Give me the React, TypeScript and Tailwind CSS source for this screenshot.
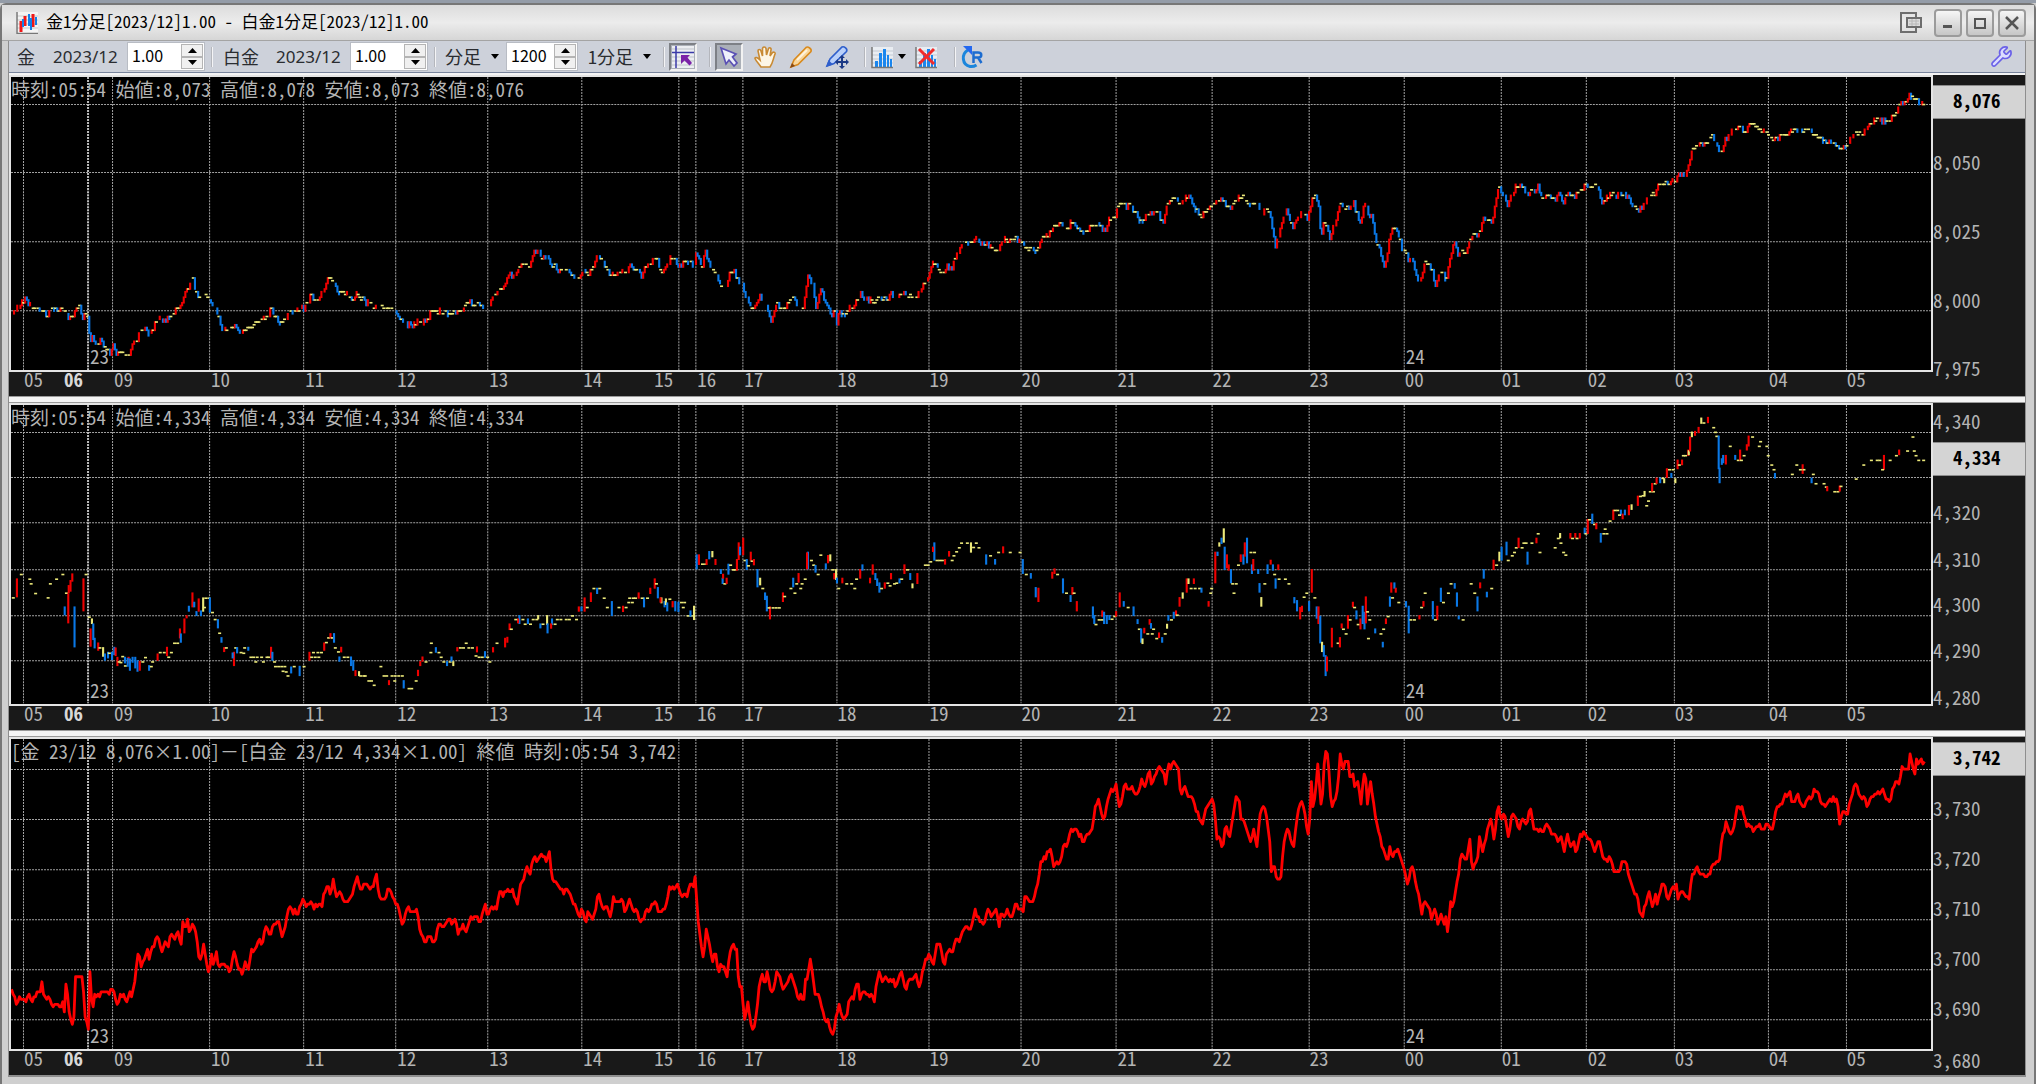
import { useState } from 'react'
import type { ReactNode } from 'react'
import { Wrench } from 'lucide-react'

// Chart drawing units: the plot is recorded in three stretches, each with its own start
const STARTS = [0, 1478, 2993]
const UNIT_X = 2.24
const UNIT_Y = 3
const PLOT_W = 1919
const AXIS_W = 1923

const COLORS: Record<string, string> = { r: '#f00000', b: '#0a78e6', y: '#ece97a' }

const GRID_X = [12, 101, 198, 292, 384, 476, 570, 667, 684, 731, 825, 917, 1009, 1104, 1200, 1297, 1392, 1489, 1574, 1662, 1756, 1834]
const DAY_X = 77

const HOURS: [string, number][] = [
  ['05', 15], ['06', 55], ['09', 105], ['10', 202], ['11', 296], ['12', 388], ['13', 480], ['14', 574], ['15', 645],
  ['16', 688], ['17', 735], ['18', 828], ['19', 920], ['20', 1012], ['21', 1108], ['22', 1203], ['23', 1300],
  ['00', 1395], ['01', 1492], ['02', 1578], ['03', 1665], ['04', 1759], ['05', 1837],
]

const GOLD = [
  '30,705 38,695 48,672 58,662 70,678 80,690 95,692 105,710 112,700 118,688 130,694 140,680 148,700 158,725 168,700 180,675 188,715 194,700 199,712 204,790 210,770 218,800 228,785 240,810 250,825 256,800 262,828 275,815 285,828 293,820 300,800 308,785 316,765 326,748 336,765 345,745 358,715 370,725 380,710 390,715 398,685 405,690 412,660 420,630 428,610 434,595 440,630 450,660 460,650 471,665 478,675 486,690 493,715 500,755 510,750 520,755 528,735 540,760 550,755 560,740 575,735 590,720 600,715 610,682 620,715 632,735 642,715 655,700 668,692 680,688 692,675 698,650 706,665 716,662 724,640 732,615 740,595 748,600 756,635 768,645 780,640 792,660 802,638 812,658 822,668 835,672 845,685 858,670 868,690 880,685 890,705 900,720 912,735 925,738 938,725 955,728 965,700 975,690 985,698 995,692 1008,705 1020,695 1032,700 1042,680 1055,665 1068,680 1080,670 1090,690 1102,660 1112,650 1120,630 1132,615 1144,585 1155,595 1165,565 1178,550 1190,555 1198,515 1208,520 1218,540 1228,530 1238,560 1250,570 1262,572 1275,575 1285,597 1298,595 1308,575 1320,585 1328,560 1336,545 1340,522 1348,540 1358,560 1370,585 1385,580 1395,570 1405,575 1413,560 1422,570 1432,575 1440,592 1450,555 1462,545 1472,535 1480,565 1490,575 1500,545 1502,530 1512,545 1522,565 1535,550 1548,552 1558,553',
  '81,520 90,540 96,568 103,518 110,550 122,575 130,600 140,630 150,625 158,580 168,570 175,600 184,610 192,640 200,670 210,685 218,670 225,650 235,665 243,690 251,728 258,695 264,670 273,688 283,680 290,665 298,650 306,675 315,690 322,695 328,640 333,592 340,600 346,630 350,680 358,650 364,620 370,665 378,690 386,705 394,690 397,735 402,700 410,710 420,705 428,680 438,675 446,662 452,640 458,655 470,660 482,665 495,655 508,662 518,645 530,655 540,638 550,640 567,655 576,648 585,635 594,610 602,590 608,560 614,552 625,560 635,582 645,560 655,565 662,540 670,520 678,495 685,485 693,505 700,490 708,475 718,490 730,495 738,500 748,505 757,515 765,492 775,478 785,490 797,475 808,485 820,500 832,505 845,515 855,480 868,468 880,450 890,435 900,440 912,448 927,422 935,450 948,462 960,455 970,435 980,432 990,445 1000,458 1006,420 1015,412 1024,405 1030,370 1040,380 1053,378 1063,395 1072,420 1085,432 1093,405 1105,405 1115,390 1128,435 1136,380 1150,360 1160,355 1168,380 1178,350 1188,350 1198,385 1214,415 1222,390 1236,385 1246,370 1258,358 1270,378 1282,388 1292,365 1302,348 1312,355 1322,385 1335,370 1350,400 1358,385 1368,410 1373,450 1380,500 1388,460 1396,415 1405,395 1412,425 1420,445 1430,420 1442,400 1453,425 1459,375 1463,350 1470,350 1478,385 1481,480 1488,420 1495,445 1502,475 1510,438',
  '0,435 6,390 12,368 20,388 32,385 40,370 48,405 56,440 62,385 68,368 72,410 80,410 85,450 90,485 98,510 108,560 116,520 122,465 132,445 140,470 146,500 155,515 163,550 170,535 178,575 186,615 192,590 200,550 208,555 216,580 224,620 232,585 240,575 246,605 254,550 262,510 268,490 272,530 282,515 290,520 298,495 308,465 318,480 326,440 332,410 340,425 348,430 354,400 360,345 367,325 374,340 384,375 394,350 402,325 414,315 422,330 432,340 444,335 453,325 460,358 472,345 490,365 500,345 510,370 520,348 535,350 548,325 560,318 572,325 586,318 595,380 610,350 630,348 648,345 665,380 680,392 692,375 705,350 716,340 724,315 740,312 755,305 770,290 785,282 790,250 798,205 808,205 820,195 832,188 843,172 852,200 862,222 872,180 885,160 898,150 905,142 914,165 920,150 928,130 940,145 955,155 968,165 978,175 988,182 1000,165 1012,165 1028,152 1045,158 1060,150 1078,170 1088,188 1100,185 1115,188 1128,215 1140,205 1150,185 1162,160 1175,165 1188,150 1200,135 1210,115 1220,125 1232,130 1245,110 1256,98 1264,72 1276,72 1284,45 1290,62 1300,62 1312,80 1318,70',
]

// r: up, b: down, y: unchanged; x,high,low
const PLATINUM = [
  'y32,596 r40,540,592 y50,526 y69,540 y72,554 y82,583 y110,596 y115,554 y129,540 y143,526 b147,624,646 y151,582 r155,585,670 r156,560,580 r160,545,575 r164,525,545 b169,624,742 r189,540,634 y195,526 y202,654 r205,690,740 y208,660,672 b211,675,720 b214,718,745 r222,732,752 y226,746 y233,746,770 b237,765,782 b244,760,775 y247,762 b253,760,780 b258,745,765 r261,747,768 r265,775,798 y269,788 y273,790 y277,772 b282,775,790 y283,800 r290,775,790 b288,778,800 b293,780,812 b299,775,788 b305,775,805 b310,785,815 r315,787,812 y322,788 y328,775 b336,800,812 y341,802 y344,788 r355,765,782 y361,760 y370,760 r376,745,768 y380,774 y386,760 y393,732 y400,732 r405,690,715 b407,705,728 r415,660,700 r420,650,655 b425,622,635 r433,582,622 b437,610,622 b442,638,648 r447,600,635 b452,636,648 y457,597,635 y463,597 y460,625 y470,597 b472,597,638 y478,640 y484,661 b490,662,685 y494,702 b498,716,728 r504,746,756 y509,746 r526,760,798 b523,762,775 y530,746 b533,746,760 y542,760 y548,762 y550,746 b558,745,752 y564,774 y570,774 y578,774 y575,788 y588,774 y592,788 y600,774 y604,774 r609,745,775 b612,760,782 y617,788 y619,802 y626,802 y633,802 y636,816 y643,818 y640,802 y647,830 b654,804,820 y661,802 b673,802,828 y683,802 r695,760,782 y700,774 y704,760 y708,774 y716,774 y714,760 y722,760 r728,732,752 y733,730 y738,716 r742,704,715 y746,716 b750,704,728 y753,746 y760,758 r766,745,757 b762,774,785 y773,774 y781,774 b788,774,798 b793,785,812 r798,815,828 y806,818,828 y810,830 y817,830 y820,830 y828,845 y834,845 y840,858 y855,802 y862,830 r873,845,855 y868,830 y880,830 y887,830 y886,845 y895,830 y903,830 b906,845,865 y918,868 y924,868 y934,845 r938,814,828 r943,788,798 r948,774,785 y956,788 y967,760 y968,732 b978,746,758 y985,760 y990,774 y996,788 b1003,788,798 y1010,788 b1013,774,785 y1017,788,798 r1026,746,754 y1033,746 y1040,746 y1046,732 y1052,746 y1060,746 r1070,744,757 y1068,770 y1075,774 y1082,774 b1088,758,773 y1094,774 y1099,788 r1106,746,757 y1115,732 r1133,718,742 r1138,715,728 r1143,675,690 y1147,690 b1165,650,672 r1162,660,670 y1157,661 y1173,661 b1184,660,672 y1178,675 y1190,675 y1196,661 y1204,661 y1207,650,658 b1212,675,685 y1218,675 y1227,650,675 b1228,675,700 b1238,660,675 r1236,675,686 y1245,675 y1250,661 y1258,661 y1270,661 y1277,661 y1284,650 y1293,661 r1298,624,635 b1304,624,634 r1311,597,635 y1317,625 r1325,582,606 y1332,568 b1339,568,582 y1345,568 y1355,597 y1362,625 b1372,608,648 y1388,625 r1397,622,636 y1404,625 y1410,610 y1412,597 y1420,597 y1418,610 y1425,597 r1432,582,596 b1444,597,622 y1440,597 y1452,597 r1458,568,582 r1468,540,566 y1472,554 b1475,566,595 y1483,597,610 r1481,597,608 b1490,608,622 y1493,600,615 b1496,612,634 y1502,600 r1508,608,622 b1514,608,634 b1521,610,636 y1528,610 y1535,610 y1532,625 y1543,650 y1550,650 b1548,636,650 y1556,622,660',
  'b84,468,508 r89,468,495 y97,495 y104,495 r106,482,495 b112,458,478 y119,458,472 r126,482,495 b138,512,522 b142,538,552 r143,526,536 y147,554 r151,538,552 b155,496,524 y160,498 y166,512 y170,512 r174,482,512 r178,432,480 b181,445,466 r188,418,466 y192,484 b196,482,510 r205,460,482 y200,500 y208,486 r212,482,496 b220,512,562 y226,538,556 y232,568 b237,582,600 b241,592,634 r248,624,658 y246,626 y255,626 y262,626 y269,626 r277,582,606 y281,592 y295,568 b300,538,562 y304,582 y308,554 r312,524,548 y317,568 y320,554 y327,540 b333,460,508 r331,462,508 y341,484 y346,498 b350,500,518 y356,526 y362,468 b373,495,508 r378,470,490 y383,468,484 y389,512 r392,524,538 y396,512,540 b398,538,550 y402,568 r410,538,550 y420,554 y431,554 y438,568 y442,540 r450,512,536 b455,498,512 r472,538,550 r478,498,524 b484,524,540 b488,540,558 b493,552,578 y498,568 r505,552,566 y512,552 r519,524,538 y517,560 y527,554 y532,552 b538,540,550 y543,540 r549,498,522 y556,512 b562,524,540 y567,555,565 r578,524,552 y596,498 y602,498 y608,488 b616,432,482 r613,445,456 y622,484 y628,484 y634,484 r640,482,494 r649,458,470 y656,484 y660,470 y666,458 y672,446 y677,432 y690,432 y698,432,458 y704,445 y710,432 y716,446 b732,468,494 y742,470 b752,482,494 y760,460 r770,444,460 y786,460 y808,460 b814,482,522 y822,526 b832,524,536 b843,566,592 r849,568,606 r880,520,536 r885,510,522 y892,526 b904,540,580 y912,582 b921,590,606 r925,566,584 y929,582 r935,608,634 b971,624,655 b974,650,672 y978,676 y985,662 r992,636,650 b996,640,672 b1002,650,672 y991,662 b1008,650,660 y1014,660 y1020,652 r1023,638,650 r1031,582,622 b1040,608,620 y1050,625 b1062,624,648 b1071,662,672 y1075,690 b1079,690,728 y1082,720,732 r1086,688,700 y1094,704 r1098,662,674 b1101,674,686 y1107,690 y1104,704 y1114,718 r1119,702,714 b1126,716,728 y1133,704 y1137,676,686 b1140,650,662 y1147,662 b1152,640,656 r1157,636,646 y1160,648 r1165,596,620 y1172,582,596 r1181,540,578 y1185,540,552 r1197,540,552 y1191,568 y1200,568 y1210,568 b1214,568,578 r1230,608,620 y1237,568 y1235,582 r1245,460,550 b1250,460,468 y1254,432,440 b1259,418,432 y1264,390,428 b1266,445,510 r1271,468,505 r1275,498,512 b1280,512,550 y1284,554 y1292,554 y1287,582 y1297,498 r1302,468,486 b1308,468,494 r1311,432,470 b1316,418,490 y1325,460 y1333,460 b1327,498,522 r1330,482,512 b1341,512,522 b1344,554,578 y1348,596,620 y1356,554 b1362,498,522 r1369,484,494 b1374,498,512 y1378,526 b1380,540,566 r1386,498,510 y1388,540 y1402,540 y1410,554 b1422,596,610 b1428,605,634 r1435,626,658 r1439,622,636 y1444,594 y1450,582 b1455,608,634 r1461,512,578 y1468,596 b1472,624,656 r1476,624,672 b1480,652,730 y1484,730,756 b1488,740,770 b1492,770,828 r1495,774,814 r1506,688,742',
  'y5,732 r9,716,742 r13,675,685 y17,690 y23,704 r27,650,686 y32,662 r38,610,622 y42,625 b46,636,658 y50,676 r55,660,688 b60,622,672 b64,640,688 r67,594,670 y71,638 y76,662 y73,718 b88,690,700 y101,704 y107,690 b105,730,742 r112,660,672 y117,652 b121,594,620 r124,552,578 y127,596 b131,552,566 r134,568,578 y141,610 b157,608,622 b163,622,700 y168,662 y176,662 r187,650,658 y192,625 r196,608,620 y200,582 b217,608,658 r227,622,660 y223,662 b235,568,606 y241,610 y252,582 y258,554 b266,554,566 b271,582,620 b275,652,658 y285,662 y303,554 y311,582 b317,594,634 r323,552,565 b331,512,536 b338,580,592 y349,568 r353,484,510 y360,498 y366,460,484 b371,445,482 b382,430,466 y386,484 y395,470 y400,460 y404,446 r409,418,444 y417,446 y421,432 y426,432 b429,460,494 y439,432 r449,418,430 y453,404 y457,460 y491,446 y498,418 y502,404,415 y504,432 y510,460 y515,468 r525,404,416 y530,418 r536,404,414 y540,418 r546,404,416 b557,388,402 y560,404 r564,362,402 b574,346,372 y568,362 y579,376 r583,374,388 b593,404,428 y600,404 y603,390 y607,404 y614,366 r621,334,360 y625,334 y631,334 b638,334,346 y635,348 r642,346,358 b647,334,346 r656,320,346 y662,318,330 r676,292,318 y682,292 y688,290 y691,278,290 y696,320 y700,306 y704,278 y711,278 r708,254,275 y715,254 r718,238,252 b726,238,250 y732,238 y735,240,250 r741,210,234 y747,212 b751,224,234 y755,212 y760,240,250 r765,184,208 y769,198 r775,184,196 y778,170 y783,170 r789,154,168 y790,156,166 r793,115,155 y797,100,112 r804,98,108 r812,86,100 y818,58,72 y824,72 r833,56,70 y846,86 y850,100 y853,112 b857,112,208 b859,208,250 b864,180,195 r873,170,194 b867,170,190 y883,142 b894,170,180 y901,184 r905,154,182 y908,184 y914,170 r920,138,152 r924,112,140 y933,114 y948,142 y951,128 y965,142 y968,170 y976,198 y981,212 b983,224,236 y1022,226 y1032,198 r1045,198,222 y1040,212 y1048,212 b1065,238,250 y1069,226 y1075,254 y1093,254 y1098,264 r1100,264,274 y1117,278 y1124,278 r1128,262,275 y1131,262 y1165,240 y1182,198 y1199,184 y1212,184 y1218,184 r1227,170,210 y1224,212 y1241,184 y1255,170 r1261,154,166 y1280,156 y1292,114 y1295,156 y1299,170 y1305,184 y1316,184',
]

const SPREAD = [
  '28,780 40,820 48,800 55,820 68,795 76,818 84,780 90,790 96,760 104,810 110,795 118,820 128,820 136,835 142,815 147,850 151,715 154,810 160,870 167,895 171,730 178,745 184,735 188,760 192,860 196,880 200,895 203,715 206,760 208,850 214,800 222,800 230,790 238,780 246,795 253,775 264,820 272,800 280,800 286,820 292,780 298,795 303,760 306,730 309,680 314,670 320,715 328,670 332,660 337,685 345,645 352,625 358,625 364,668 370,635 378,655 384,610 392,625 400,610 408,640 412,570 417,610 422,565 426,610 434,580 440,610 444,640 450,700 458,645 464,700 471,730 475,670 481,715 486,660 492,710 500,700 510,712 518,718 526,665 534,705 546,730 552,700 558,712 566,660 574,665 582,625 590,640 600,582 607,620 617,580 626,570 633,622 640,590 650,535 660,545 672,545 680,505 688,530 698,515 706,530 716,525 724,530 728,490 736,450 742,500 748,450 756,505 762,475 770,510 780,518 790,495 802,445 810,475 820,460 828,470 838,465 845,430 850,490 860,515 870,480 880,490 888,520 896,540 904,595 912,530 920,545 936,540 941,600 948,625 955,640 964,610 972,640 985,590 998,582 1006,570 1014,580 1022,570 1028,605 1040,585 1048,600 1056,565 1070,555 1078,575 1088,520 1094,560 1104,535 1114,530 1120,490 1134,490 1142,475 1152,490 1160,520 1168,460 1174,445 1180,415 1188,430 1196,380 1204,390 1210,370 1218,378 1226,390 1232,372 1238,440 1246,460 1254,460 1264,485 1274,470 1284,520 1292,535 1302,560 1305,525 1313,580 1320,545 1328,565 1336,540 1342,478 1348,530 1360,525 1370,565 1376,495 1384,520 1394,510 1402,545 1412,510 1420,540 1428,535 1434,575 1442,575 1450,535 1458,540 1468,510 1478,540 1486,545 1495,520 1502,465 1510,480 1518,465 1524,490 1532,492 1540,500 1548,462 1556,460',
  '81,440 86,560 92,620 97,685 102,650 105,595 112,640 120,690 127,670 132,730 140,705 152,730 160,655 166,645 174,655 178,775 184,765 190,850 193,880 198,805 204,870 209,895 218,860 225,750 230,735 237,755 243,718 250,790 258,775 263,715 270,740 278,775 288,750 296,735 304,755 312,815 318,785 323,835 327,750 333,735 338,685 344,740 348,790 358,795 366,840 372,870 376,865 382,890 388,912 396,865 403,820 410,865 418,865 428,800 436,800 444,750 450,805 460,780 468,800 476,790 481,820 486,760 493,720 500,755 508,735 516,755 524,750 531,778 541,720 552,778 560,745 574,735 582,778 590,730 596,690 606,675 616,715 620,645 630,650 638,700 646,665 658,665 663,615 670,635 680,600 688,580 694,605 702,575 706,540 714,565 728,582 737,525 744,560 754,540 763,595 766,540 774,560 780,540 788,568 798,520 808,535 814,545 820,495 830,518 840,500 848,460 854,400 862,385 876,355 884,415 892,400 902,380 906,325 912,355 922,300 934,300 942,318 950,335 962,310 970,290 974,250 982,205 988,240 996,280 1002,230 1010,180 1020,185 1023,160 1030,235 1036,210 1042,160 1050,175 1060,175 1070,200 1080,145 1088,170 1097,115 1101,170 1110,140 1120,110 1128,130 1135,155 1140,100 1146,115 1151,100 1158,115 1163,115 1168,200 1177,160 1184,200 1196,205 1202,245 1208,255 1215,292 1222,240 1232,225 1239,205 1243,240 1248,320 1256,325 1262,355 1268,285 1276,322 1284,270 1290,205 1298,205 1302,270 1312,285 1326,335 1330,285 1338,355 1344,260 1352,225 1360,260 1366,310 1371,445 1376,390 1382,440 1393,445 1398,340 1405,298 1414,320 1419,370 1426,280 1432,240 1440,205 1446,255 1453,308 1458,240 1461,125 1464,235 1470,180 1476,85 1480,215 1484,215 1488,110 1492,68 1498,75 1502,190 1507,232',
  '0,205 5,150 10,70 16,115 22,90 28,85 32,150 38,130 42,170 50,150 56,232 60,160 66,115 71,232 77,145 82,195 86,240 94,295 102,340 110,370 116,395 122,345 126,385 136,355 142,360 148,395 152,415 162,470 168,400 174,425 182,480 192,545 198,520 206,520 214,560 220,535 230,580 236,540 242,590 246,560 250,605 258,510 262,540 270,470 276,420 280,375 286,370 292,398 300,325 305,430 312,385 316,400 322,315 328,365 336,320 346,265 355,330 360,250 364,220 370,270 378,245 386,320 396,250 404,270 410,300 418,265 425,290 436,232 444,305 454,295 464,305 474,285 482,305 492,320 498,335 506,315 511,370 518,305 526,350 532,335 538,370 545,325 556,310 566,325 575,340 580,365 588,325 596,370 606,395 612,372 622,425 634,430 640,400 650,395 658,445 664,460 668,500 674,495 680,540 686,565 692,510 696,530 700,475 710,530 716,500 720,520 732,450 742,505 754,470 764,465 766,505 774,480 784,505 792,500 796,445 806,410 816,430 826,440 836,440 844,400 854,385 858,410 862,340 868,310 874,280 880,305 890,305 898,235 904,232 914,245 920,300 926,280 934,305 946,285 954,305 966,285 976,305 982,265 988,225 996,225 1006,190 1016,190 1024,215 1034,190 1040,225 1048,235 1056,200 1064,210 1070,175 1080,190 1090,230 1100,220 1108,205 1118,205 1124,220 1128,275 1136,240 1146,245 1154,195 1164,165 1172,200 1182,200 1190,230 1198,200 1206,190 1216,180 1222,190 1226,165 1230,215 1240,215 1250,160 1262,155 1268,115 1278,110 1280,130 1286,70 1295,145 1300,90 1306,110 1309,75 1314,110 1320,90',
]

type Point = [number, number]
type Mark = { kind: string; x: number; top: number; bottom: number }

function readPoints(parts: string[], shift: number): Point[] {
  return parts.flatMap((part, i) =>
    part.split(' ').map(p => {
      const [x, y] = p.split(',').map(Number)
      return [(x + STARTS[i]) / UNIT_X - 12, y / UNIT_Y + shift] as Point
    })
  )
}

function readMarks(parts: string[], shift: number): Mark[] {
  return parts.flatMap((part, i) =>
    part.split(' ').map(p => {
      const [x, a, b] = p.slice(1).split(',').map(Number)
      return {
        kind: p[0],
        x: (x + STARTS[i]) / UNIT_X - 12,
        top: a / UNIT_Y + shift,
        bottom: (b ?? a) / UNIT_Y + shift,
      }
    })
  )
}

function makeRandom(seed: number) {
  let s = seed
  return () => {
    s = (s * 1664525 + 1013904223) % 4294967296
    return s / 4294967296
  }
}

// One bar per step between the recorded points, snapped to the price tick
function resample(points: Point[], tick: number, noise: number, seed: number): Point[] {
  const random = makeRandom(seed)
  const out: Point[] = []
  let k = 0
  for (let x = points[0][0]; x < points[points.length - 1][0]; x += 1.6) {
    while (points[k + 1][0] < x) k++
    const [x0, y0] = points[k]
    const [x1, y1] = points[k + 1]
    const y = y0 + ((y1 - y0) * (x - x0)) / (x1 - x0) + (random() - 0.5) * noise
    out.push([x, Math.round(y / tick) * tick])
  }
  return out
}

function toCandles(points: Point[]): Mark[] {
  const random = makeRandom(7)
  const bars = resample(points, 2.75, 5, 11)
  const marks: Mark[] = []
  for (let i = 1; i < bars.length; i++) {
    const [x, y] = bars[i]
    const prev = bars[i - 1][1]
    if (Math.abs(y - prev) < 1) {
      if (random() < 0.6) marks.push({ kind: 'y', x, top: y, bottom: y })
    } else if (Math.abs(y - prev) > 3) {
      marks.push({ kind: y < prev ? 'r' : 'b', x, top: Math.min(y, prev), bottom: Math.max(y, prev) })
    } else if (random() < 0.5) {
      marks.push({ kind: y < prev ? 'r' : 'b', x, top: Math.min(y, prev), bottom: Math.max(y, prev) })
    } else if (random() < 0.7) {
      marks.push({ kind: 'y', x, top: y, bottom: y })
    }
  }
  return marks
}

const goldMarks = toCandles(readPoints(GOLD, 2))
const platinumMarks = readMarks(PLATINUM, -6)
const spreadPath = 'M' + resample(readPoints(SPREAD, -9), 2.5, 5, 5).map(([x, y]) => `${x.toFixed(1)},${y.toFixed(1)}`).join('L')

type PanelProps = {
  title: ReactNode
  size: string
  plotHeight: number
  gridY: number[]
  prices: [string, number][]
  height: number
  last: string
  lastTop: number
  marks?: Mark[]
  line?: string
}

function Panel({ title, size, plotHeight, gridY, prices, height, last, lastTop, marks = [], line }: PanelProps) {
  return (
    <section className={`${size} min-h-0 grid grid-cols-[1fr_92px] bg-[#191919] text-[19px] text-[#b4b4b4]`}>
      <div className="flex flex-col min-w-0 min-h-0">
        <div className="relative flex-1 min-h-0 border-2 border-[#e4e4e4] bg-black">
          <svg className="block w-full h-full" viewBox={`0 0 ${PLOT_W} ${plotHeight}`} preserveAspectRatio="none">
            <g stroke="#a2a2a2" strokeWidth="1" strokeDasharray="2 1">
              {GRID_X.map(x => <line key={x} x1={x + 0.5} x2={x + 0.5} y1="0" y2={plotHeight} />)}
              {gridY.map(y => <line key={y} x1="0" x2={PLOT_W} y1={y + 0.5} y2={y + 0.5} />)}
            </g>
            <line x1={DAY_X} x2={DAY_X} y1="0" y2={plotHeight} stroke="#bcbcbc" strokeWidth="2" strokeDasharray="2 1" />
            {marks.map((m, i) => {
              const flat = m.kind === 'y' && m.top === m.bottom
              return (
                <rect
                  key={i}
                  x={m.x - (flat ? 1.5 : 1)}
                  y={m.top - 0.8}
                  width={flat ? 3 : 2.1}
                  height={m.bottom - m.top + 1.6}
                  fill={COLORS[m.kind]}
                />
              )
            })}
            {line && <path d={line} fill="none" stroke="#ff0000" strokeWidth="2.8" strokeLinejoin="round" />}
          </svg>
          <h2 className="absolute left-0 top-0 leading-6 whitespace-pre">{title}</h2>
          <span className="absolute bottom-1 leading-5" style={{ left: `${(79 / PLOT_W) * 100}%` }}>23</span>
          <span className="absolute bottom-1 leading-5" style={{ left: `${(1394 / PLOT_W) * 100}%` }}>24</span>
        </div>
        <div className="flex h-6 leading-[14px]">
          <span style={{ width: `${(HOURS[0][1] / AXIS_W) * 100}%` }} />
          {HOURS.map(([label, x], i) => (
            <span
              key={i}
              className={label === '06' ? 'font-bold text-[#d8d8d8]' : ''}
              style={{ width: `${(((HOURS[i + 1]?.[1] ?? AXIS_W) - x) / AXIS_W) * 100}%` }}
            >
              {label}
            </span>
          ))}
        </div>
      </div>
      <div className="relative flex flex-col min-h-0 leading-5">
        <span style={{ height: `${(prices[0][1] / height) * 100}%` }} />
        {prices.map(([label, y], i) => (
          <span key={label} style={{ height: `${(((prices[i + 1]?.[1] ?? height) - y) / height) * 100}%` }}>{label}</span>
        ))}
        <strong
          className="absolute inset-x-0 h-[34px] pl-5 leading-7 border-y border-[#8c8c8c] bg-[#d4d4d4] text-black"
          style={{ top: `${(lastTop / height) * 100}%` }}
        >
          {last}
        </strong>
      </div>
    </section>
  )
}

function Splitter() {
  return <div className="h-[7px] shrink-0 border-y border-[#9a9a9a] bg-[#f4f4f4]" />
}

function NumberBox({ label, value, step, width, decimals }: { label: string; value: number; step: number; width: string; decimals: number }) {
  const [current, setCurrent] = useState(value)
  return (
    <div className={`${width} flex h-[29px] border border-[#b8bcc4] bg-white`}>
      <input
        aria-label={label}
        value={current.toFixed(decimals)}
        onChange={e => setCurrent(Number(e.target.value) || 0)}
        className="w-0 flex-1 h-6 pl-1 text-[16px] leading-6 text-black outline-none [font-feature-settings:normal]"
      />
      <div className="flex flex-col w-[22px] my-px mr-px">
        <button aria-label={`${label} +`} onClick={() => setCurrent(current + step)} className="flex-1 flex items-center justify-center border border-[#b4b4b4] bg-[#f0f0f0]">
          <svg width="9" height="5" viewBox="0 0 9 5"><path d="M4.5 0L9 5H0z" /></svg>
        </button>
        <button aria-label={`${label} -`} onClick={() => setCurrent(current - step)} className="flex-1 flex items-center justify-center border border-[#b4b4b4] bg-[#f0f0f0]">
          <svg width="9" height="5" viewBox="0 0 9 5"><path d="M0 0H9L4.5 5z" /></svg>
        </button>
      </div>
    </div>
  )
}

function Divider() {
  return <div className="w-[2px] h-[20px] bg-[#f4f4f6] border-l border-[#b4b6bc]" />
}

function Caret() {
  return <svg width="8" height="5" viewBox="0 0 8 5"><path d="M0 0H8L4 5z" /></svg>
}

function BarsIcon({ crossed }: { crossed?: boolean }) {
  return (
    <svg width="24" height="24" viewBox="0 0 24 24">
      <path d="M2 2H23V22H2z" fill="#e9edf2" />
      <path d="M2 6H23M2 10H23M2 14H23M2 18H23" stroke="#c3c9d2" />
      <path d="M5 16h3v6H5zM9 8h3v14H9zM13 4h3v18h-3zM17 10h2v12h-2zM20 14h2v8h-2z" fill="#1a86ee" />
      <path d="M2 2V22.500H23" stroke="#777" strokeWidth="1.500" fill="none" />
      {crossed && <path d="M5 4L20 19M20 4L5 19" stroke="#f22b2b" strokeWidth="3" />}
    </svg>
  )
}

const TOOL = 'flex items-center justify-center w-7 h-7'
const PRESSED = 'flex items-center justify-center w-7 h-7 border-2 border-t-[#7d8086] border-l-[#7d8086] border-r-[#f2f2f2] border-b-[#f2f2f2] bg-[#abb0b8]'
const CAPTION = 'flex items-center justify-center w-7 h-7 rounded-[4px] border-2 border-[#9b9b9b] bg-linear-to-b from-[#f6f6f6] to-[#c6c6c6]'

export default function App() {
  const [tool, setTool] = useState('pointer')

  return (
    <div className="flex flex-col h-screen min-h-[640px] border-t-[3px] border-[#949ca8] bg-[#cfcfcf] font-['Noto_Sans_CJK_JP',sans-serif] [font-feature-settings:'hwid'] overflow-hidden">
      <div className="flex flex-col flex-1 min-h-0 pb-[2px] border-t-2 border-x-2 border-[#777777] rounded-t-[6px]">
        <header className="flex items-center h-9 pl-[14px] pr-2 border-b border-[#a4a4a4] bg-linear-to-b from-[#dcdcdc] via-[#ececec] to-[#d6d6d6]">
          <svg width="22" height="22" viewBox="0 0 22 22">
            <path d="M0 0H22V22H0z" fill="#f4f4f4" />
            <path d="M1 4H22M1 8H22M1 12H22M1 16H22" stroke="#c8c8c8" />
            <path d="M5 9v11M9 4v10M17 2v13" stroke="#f01818" strokeWidth="3" />
            <path d="M7 7v8M13 2v12M15 6v12M20 5v8" stroke="#1480e8" strokeWidth="2" />
            <path d="M1 0V21.500H22" stroke="#777" strokeWidth="1.500" fill="none" />
          </svg>
          <h1 className="ml-2 text-[17px] leading-6 pb-1 text-black">金1分足[2023/12]1.00 - 白金1分足[2023/12]1.00</h1>
          <div className="flex items-center gap-1 ml-auto">
            <button aria-label="Detach" className="flex items-center justify-center w-6 h-6 mr-[7px]">
              <svg width="24" height="22" viewBox="0 0 24 22" fill="none" stroke="#6e6e6e" strokeWidth="2">
                <path d="M17 5V1H2V20H17V16" />
                <path d="M8 6H22V15H8z" fill="#ddd" />
                <path d="M10 9H20M10 12H20M13 7V14M17 7V14" stroke="#b8b8b8" strokeWidth="1" />
              </svg>
            </button>
            <button aria-label="Minimize" className={CAPTION}><svg width="14" height="14" viewBox="0 0 14 14"><path d="M2 9H11V12H2z" fill="#555" /></svg></button>
            <button aria-label="Maximize" className={CAPTION}><svg width="14" height="14" viewBox="0 0 14 14"><path d="M2 3H12V12H2z" fill="none" stroke="#555" strokeWidth="2" /></svg></button>
            <button aria-label="Close" className={CAPTION}><svg width="14" height="14" viewBox="0 0 14 14"><path d="M1 1L13 13M13 1L1 13" stroke="#555" strokeWidth="2.500" /></svg></button>
          </div>
        </header>

        <div className="flex flex-col flex-1 min-h-0 ml-[6px] mr-2 mb-[5px] border-x border-b-2 border-[#8e8e8e]">
          <div className="flex items-center h-8 shrink-0 pl-2 pr-3 border-b border-[#78849c] bg-[#cdd1da] text-[18px] text-[#2a2c30]">
            <span className="w-9">金</span>
            <span className="w-[74px] text-[17px] font-['Noto_Sans'] [font-feature-settings:normal]">2023/12</span>
            <NumberBox label="金" value={1} step={0.01} decimals={2} width="w-[78px]" />
            <span className="mx-[6px]"><Divider /></span>
            <span className="w-[57px] pl-1">白金</span>
            <span className="w-[74px] text-[17px] font-['Noto_Sans'] [font-feature-settings:normal]">2023/12</span>
            <NumberBox label="白金" value={1} step={0.01} decimals={2} width="w-[78px]" />
            <span className="mx-[6px]"><Divider /></span>
            <button className="flex items-center gap-[10px] mr-[7px] ml-[3px]">分足 <Caret /></button>
            <NumberBox label="本数" value={1200} step={1} decimals={0} width="w-[72px]" />
            <button className="flex items-center gap-[10px] ml-[10px] mr-3">1分足 <Caret /></button>
            <Divider />
            <button aria-label="Crosshair" className={`${PRESSED} ml-1 mr-3`}>
              <svg width="22" height="22" viewBox="0 0 22 22">
                <path d="M0 0H22V22H0z" fill="#eceef2" />
                <path d="M0 3H22M0 11H22M0 15H22M0 19H22" stroke="#bfc3ca" />
                <path d="M4 0V22M0 6.500H22" stroke="#3a3aa8" strokeWidth="1.500" />
                <path d="M9 9H18L15.500 11.500L20 17L17.500 19.500L12.500 14.500L9 18z" fill="#7b22a8" />
              </svg>
            </button>
            <Divider />
            <button aria-label="Pointer" onClick={() => setTool('pointer')} className={`${tool === 'pointer' ? PRESSED : TOOL} ml-1`}>
              <svg width="22" height="22" viewBox="0 0 22 22"><path d="M3 2L18 8L14.500 11L19 17L16 20L11 14L8 18z" fill="#eef0fa" stroke="#5a50b4" strokeWidth="1.700" /></svg>
            </button>
            <button aria-label="Hand" onClick={() => setTool('hand')} className={`${tool === 'hand' ? PRESSED : TOOL} ml-2`}>
              <svg width="24" height="24" viewBox="0 0 24 24"><path d="M8 22C6 19 3 16 2 13.500C2 12 4 12 7 15L5 6C5 4 7.500 4 8 6L9.500 11L9.500 3.500C10 1.500 12.500 1.500 13 3.500L13.500 10L15.500 3.500C16.500 2 18.500 3 18 5L17 11L19.500 7.500C21 6.500 22.500 7.500 22 9C20 14 20 18 17 22z" fill="#fdf6e6" stroke="#c88a34" strokeWidth="1.600" /></svg>
            </button>
            <button aria-label="Pencil" onClick={() => setTool('pencil')} className={`${tool === 'pencil' ? PRESSED : TOOL} ml-2`}>
              <svg width="24" height="24" viewBox="0 0 24 24"><path d="M2 22L5 15L17 2.500C19 1 23 4 22 6.500L9 19.500z" fill="#f9d79c" stroke="#d98a1e" strokeWidth="1.600" /><path d="M8 15L18 5" stroke="#fff3dc" strokeWidth="2" /><path d="M1 23L3 18L6 21z" fill="#8a4a14" /></svg>
            </button>
            <button aria-label="Move drawing" onClick={() => setTool('move')} className={`${tool === 'move' ? PRESSED : TOOL} ml-2`}>
              <svg width="24" height="24" viewBox="0 0 24 24"><path d="M2 21L5 14L17 2C19 1 23 4 21.500 6.500L9 18.500z" fill="#b9d0fa" stroke="#2f5fcc" strokeWidth="1.600" /><path d="M1 22L3.500 15L8 19.500z" fill="#2f5fcc" /><path d="M17 11V23M11 17H23" stroke="#1c3a86" strokeWidth="2" /><path d="M17 10L20 13H14zM17 24L14 21H20zM10 17L13 14V20zM24 17L21 20V14z" fill="#1c3a86" /></svg>
            </button>
            <span className="ml-[13px]"><Divider /></span>
            <button aria-label="Indicators" className="flex items-center gap-1 ml-1"><BarsIcon /><Caret /></button>
            <button aria-label="Remove indicators" className="ml-2"><BarsIcon crossed /></button>
            <span className="ml-4"><Divider /></span>
            <button aria-label="Reload" className="ml-1">
              <svg width="24" height="24" viewBox="0 0 24 24">
                <path d="M8 5C1 9 2 20 10 21.500C13 22 15 21 16.500 20" fill="none" stroke="#1c86dc" strokeWidth="3" />
                <path d="M3 1H12V10z" fill="#2468f0" />
                <path d="M13.500 18V7.500H18C22.500 7.500 22 12.500 18.500 12.500H14M18 12.500L21.500 18" fill="none" stroke="#1c6cd0" strokeWidth="2.500" />
              </svg>
            </button>
            <button aria-label="Settings" className="ml-auto"><Wrench size={23} color="#6a60e8" fill="#dcdcff" strokeWidth={1.700} /></button>
          </div>
          <div className="h-[2px] shrink-0 bg-[#f4f4f4]" />

          <Panel
            title="時刻:05:54 始値:8,073 高値:8,078 安値:8,073 終値:8,076"
            size="flex-[321]"
            height={321}
            plotHeight={293}
            gridY={[27, 95, 164, 233]}
            prices={[['8,050', 77], ['8,025', 146], ['8,000', 215], ['7,975', 283]]}
            last="8,076"
            lastTop={10}
            marks={goldMarks}
          />
          <Splitter />
          <Panel
            title="時刻:05:54 始値:4,334 高値:4,334 安値:4,334 終値:4,334"
            size="flex-[326]"
            height={326}
            plotHeight={298}
            gridY={[27, 72, 117, 164, 210, 255]}
            prices={[['4,340', 8], ['4,320', 99], ['4,310', 146], ['4,300', 191], ['4,290', 236], ['4,280', 283]]}
            last="4,334"
            lastTop={39}
            marks={platinumMarks}
          />
          <Splitter />
          <Panel
            title={<>[金 23/12 8,076×1.00]<span className="[font-feature-settings:normal]">－</span>[白金 23/12 4,334×1.00] 終値 時刻:05:54 3,742</>}
            size="flex-[338]"
            height={338}
            plotHeight={310}
            gridY={[30, 80, 130, 180, 230, 280]}
            prices={[['3,730', 61], ['3,720', 111], ['3,710', 161], ['3,700', 211], ['3,690', 261], ['3,680', 313]]}
            last="3,742"
            lastTop={5}
            line={spreadPath}
          />
        </div>
      </div>
    </div>
  )
}
